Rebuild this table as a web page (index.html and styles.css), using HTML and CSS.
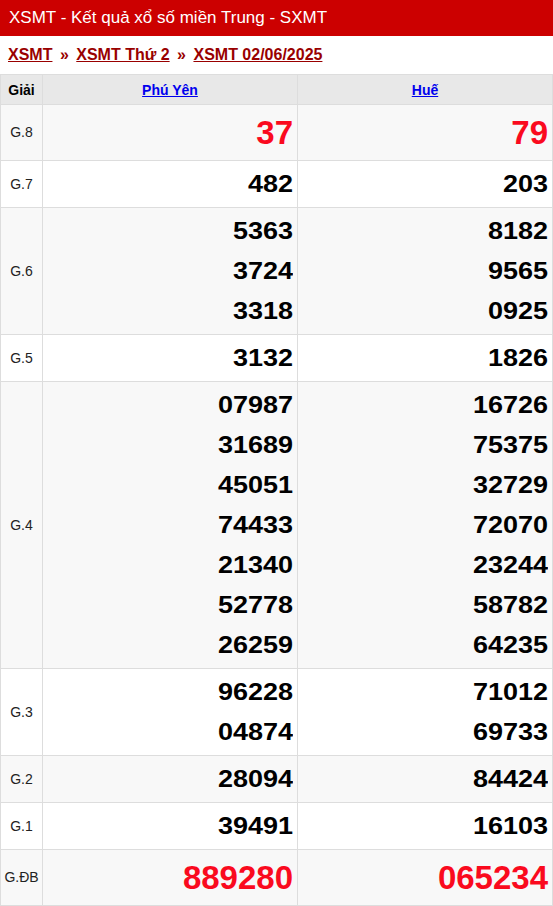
FILE: index.html
```html
<!DOCTYPE html>
<html lang="vi">
<head>
  <meta charset="UTF-8">
  <meta name="viewport" content="width=device-width, initial-scale=1.0">
  <title>XSMT - Kết quả xổ số miền Trung</title>
  <link rel="stylesheet" href="styles.css">
</head>
<body>
  <h1 class="title">XSMT - Kết quả xổ số miền Trung - SXMT</h1>
  <div class="crumbs">
    <a href="#">XSMT</a> <span class="sep">»</span>
    <a href="#">XSMT Thứ 2</a> <span class="sep">»</span>
    <a href="#">XSMT 02/06/2025</a>
  </div>

  <table class="kq">
    <thead>
      <tr>
        <th class="giai">Giải</th>
        <th><a href="#">Phú Yên</a></th>
        <th><a href="#">Huế</a></th>
      </tr>
    </thead>
    <tbody>
      <tr class="odd red">
        <td class="giai">G.8</td>
        <td><div>37</div></td>
        <td><div>79</div></td>
      </tr>
      <tr>
        <td class="giai">G.7</td>
        <td><div>482</div></td>
        <td><div>203</div></td>
      </tr>
      <tr class="odd">
        <td class="giai">G.6</td>
        <td><div>5363</div><div>3724</div><div>3318</div></td>
        <td><div>8182</div><div>9565</div><div>0925</div></td>
      </tr>
      <tr>
        <td class="giai">G.5</td>
        <td><div>3132</div></td>
        <td><div>1826</div></td>
      </tr>
      <tr class="odd">
        <td class="giai">G.4</td>
        <td><div>07987</div><div>31689</div><div>45051</div><div>74433</div><div>21340</div><div>52778</div><div>26259</div></td>
        <td><div>16726</div><div>75375</div><div>32729</div><div>72070</div><div>23244</div><div>58782</div><div>64235</div></td>
      </tr>
      <tr>
        <td class="giai">G.3</td>
        <td><div>96228</div><div>04874</div></td>
        <td><div>71012</div><div>69733</div></td>
      </tr>
      <tr class="odd">
        <td class="giai">G.2</td>
        <td><div>28094</div></td>
        <td><div>84424</div></td>
      </tr>
      <tr>
        <td class="giai">G.1</td>
        <td><div>39491</div></td>
        <td><div>16103</div></td>
      </tr>
      <tr class="odd red">
        <td class="giai">G.ĐB</td>
        <td><div>889280</div></td>
        <td><div>065234</div></td>
      </tr>
    </tbody>
  </table>
</body>
</html>
```

FILE: styles.css
```css
* {
  box-sizing: border-box;
}
body {
  font-family: 'Liberation Sans', Arial, sans-serif;
  margin: 0;
  background-color: #fff;
  color: #000;
}
.title {
  margin: 0;
  height: 36px;
  line-height: 36px;
  padding-left: 9px;
  background-color: #cc0000;
  color: #fff;
  font-size: 17px;
  font-weight: normal;
}
.crumbs {
  height: 38px;
  line-height: 38px;
  padding-left: 8px;
  font-size: 16px;
  font-weight: bold;
  color: #990000;
}
.crumbs a {
  color: #990000;
}
.crumbs .sep {
  margin: 0 3px;
}
.kq {
  width: 100%;
  border-collapse: collapse;
  table-layout: fixed;
}
.kq th,
.kq td {
  border: 1px solid #dddddd;
}
.kq th {
  height: 30px;
  background-color: #e8e8e8;
  font-size: 14px;
  font-weight: bold;
  text-align: center;
}
.kq th a {
  color: #0000ee;
}
.kq th.giai {
  width: 42px;
}
.kq tr.odd td {
  background-color: #f8f8f8;
}
.kq td {
  padding: 3px 4px;
  text-align: right;
  font-size: 27px;
  font-weight: bold;
  line-height: 40px;
}
.kq td div {
  transform: scaleY(0.87);
}
.kq td.giai {
  padding: 0;
  text-align: center;
  font-size: 14px;
  font-weight: normal;
  color: #222;
}
.kq tr.red td {
  font-size: 33px;
  line-height: 49px;
  color: #fa0a1e;
}
.kq tr.red td div {
  transform: none;
}
.kq tr.red td.giai {
  font-size: 14px;
  color: #222;
}
```
